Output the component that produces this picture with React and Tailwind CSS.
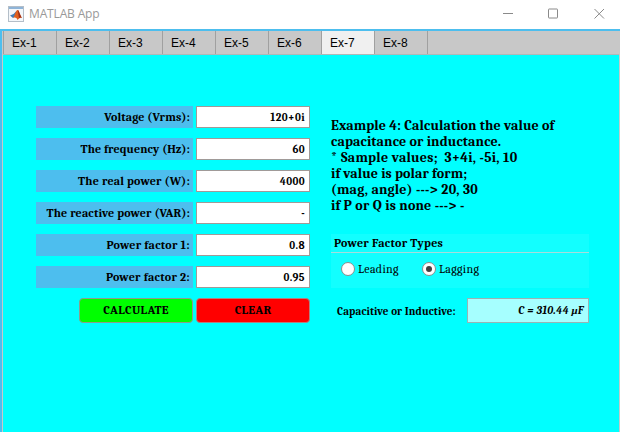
const tabs = ['Ex-1', 'Ex-2', 'Ex-3', 'Ex-4', 'Ex-5', 'Ex-6', 'Ex-7', 'Ex-8'];

const fields = [
  { label: 'Voltage (Vrms):', value: '120+0i', ls: 'tracking-[0.13px]' },
  { label: 'The frequency (Hz):', value: '60', ls: 'tracking-[0.1px]' },
  { label: 'The real power (W):', value: '4000', ls: 'tracking-[0.2px]' },
  { label: 'The reactive power (VAR):', value: '-', ls: 'tracking-[0.16px]' },
  { label: 'Power factor 1:', value: '0.8', ls: 'tracking-[0.27px]' },
  { label: 'Power factor 2:', value: '0.95', ls: 'tracking-[0.27px]' },
];

const notes = [
  { text: 'Example 4: Calculation the value of', ls: 'tracking-[0.1px]' },
  { text: 'capacitance or inductance.', ls: 'tracking-[0.12px]' },
  { text: '* Sample values;  3+4i, -5i, 10', ls: 'tracking-[0.23px]' },
  { text: 'if value is polar form;', ls: 'tracking-[0.07px]' },
  { text: '(mag, angle) ---> 20, 30', ls: 'tracking-[0.2px]' },
  { text: 'if P or Q is none ---> -', ls: 'tracking-[0.17px]' },
];

function Logo() {
  return (
    <svg width="16" height="16" viewBox="0 0 16 16" className="ml-2 shrink-0">
      <rect x="0.5" y="0.5" width="15" height="15" fill="#f4f7fa" stroke="#b4bec8" />
      <rect x="1" y="1" width="14" height="2" fill="#8fb4d8" />
      <path d="M2 9.500 5.500 8 8.500 5 7.500 10 5 12Z" fill="#3f7fb8" />
      <path d="M5 12C7 10 7.500 4 9.700 4c1.200 0 2.300 5 4.300 8-2-1-3 .2-4.500 2C8.500 11.500 7 11 5 12Z" fill="#e0601f" />
      <path d="M9.700 4c1.200 0 2.300 5 4.300 8-1.500-.9-2.300-.5-3 .2Z" fill="#9c3018" />
    </svg>
  );
}

function Radio({ label, checked, className }) {
  return (
    <div className={`flex items-center ${className}`}>
      <span className="flex size-[14px] items-center justify-center rounded-full border border-[#8c8c8c] bg-white">
        {checked && <span className="size-[6px] rounded-full bg-[#404040]" />}
      </span>
      <span className="ml-[3px] whitespace-nowrap text-[12px] leading-4 tracking-[0.3px]">{label}</span>
    </div>
  );
}

export default function App() {
  return (
    <div className="flex h-[432px] w-[620px] flex-col overflow-hidden bg-white font-['Cambria','Caladea','Liberation_Serif',serif] text-black">
      <header className="flex h-[29px] shrink-0 items-center pb-[2px] font-['Open_Sans',sans-serif]">
        <Logo />
        <span className="ml-[5px] text-[12px] leading-4 tracking-[-0.15px] text-[#999]">MATLAB App</span>
        <svg width="104" height="12" viewBox="0 0 104 12" fill="none" stroke="#8a8a8a" className="ml-auto mr-[14px]">
          <path d="M1 5.500h10" />
          <rect x="46.500" y="1" width="9" height="9" rx="0.5" />
          <path d="m92.500 1 9.500 9.500m0-9.500-9.500 9.500" />
        </svg>
      </header>
      <div className="flex grow flex-col border-l-2 border-t-2 border-[#4dbeee]">
        <div className="flex grow flex-col border-l border-r border-[#c8c8c8]">
          <nav className="flex h-6 shrink-0 border-b border-[#b0b8b8] bg-[#c8c8c8] font-['Liberation_Sans',sans-serif] text-[12px]">
            {tabs.map((t) => (
              <div key={t} className={`flex w-[53px] items-center border-r border-[#a0a0a0] pl-[8px] first:w-[54px] first:border-l ${t === 'Ex-7' ? 'bg-[#f0f0f0]' : ''}`}>
                {t}
              </div>
            ))}
          </nav>
          <main className="flex grow bg-[#00ffff] pl-[33px] pt-[51px] font-bold">
            <section className="w-[274px] shrink-0">
              <div className="flex flex-col gap-[10px]">
                {fields.map((f) => (
                  <div key={f.label} className="flex h-[22px] gap-[3px] whitespace-nowrap">
                    <div className={`flex w-[157px] items-center justify-end bg-[#4dbeee] pr-[3px] text-[12px] ${f.ls}`}>{f.label}</div>
                    <div className="flex w-[114px] items-center justify-end border border-[#a09a98] bg-white pr-[4px] pt-[3px] text-[11px] tracking-[0.4px]">{f.value}</div>
                  </div>
                ))}
              </div>
              <div className="mt-[10px] flex gap-[3px] pl-[43px] text-[12px]">
                <button className="h-[25px] w-[114px] rounded-[4px] border border-[#8c9c8c] bg-[#00ff00] pb-[2px] tracking-[0.35px]">CALCULATE</button>
                <button className="h-[25px] w-[114px] rounded-[4px] border border-[#b08080] bg-[#ff0000] pb-[2px] tracking-[0.3px]">CLEAR</button>
              </div>
            </section>
            <section className="ml-[21px] w-[258px] pt-[12px]">
              <div className="h-[116px] text-[14px] leading-4">
                {notes.map((n) => (
                  <div key={n.text} className="whitespace-pre"><span className={n.ls}>{n.text}</span></div>
                ))}
              </div>
              <div className="h-[54px] bg-[#12ffff]">
                <div className="h-[19px] border-b border-[#a8dcdc] pl-[3px] text-[12px] leading-[18px]"><span className="tracking-[0.3px]">Power Factor Types</span></div>
                <div className="flex pl-[10px] pt-[8px] font-normal">
                  <Radio label="Leading" className="w-[81px]" />
                  <Radio label="Lagging" checked className="" />
                </div>
              </div>
              <div className="mt-[10px] flex h-[25px] items-center justify-between pl-[6px] text-[11px]">
                <span className="whitespace-nowrap pt-[4px] tracking-[0.12px]">Capacitive or Inductive:</span>
                <span className="flex h-[25px] w-[122px] items-center justify-end border border-[#98b4b4] bg-[#a6ffff] pr-[4px] pt-px italic tracking-[0.25px]">C = 310.44 μF</span>
              </div>
            </section>
          </main>
        </div>
      </div>
    </div>
  );
}
